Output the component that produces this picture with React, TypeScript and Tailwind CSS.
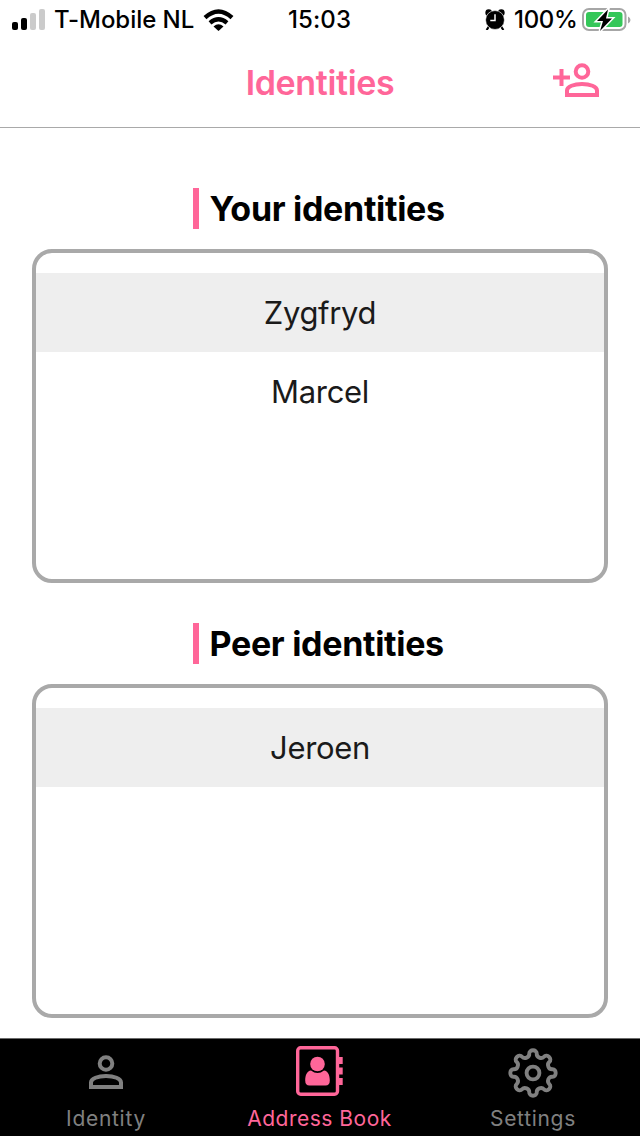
import React from "react";

function Person({ className }: { className: string }) {
  return (
    <svg className={className} viewBox="0 0 34 34" fill="none" stroke="currentColor" strokeWidth="4">
      <circle cx="17" cy="8.5" r="6.3" />
      <path d="M2 32V27.5C2 23.500 9 21 17 21S32 23.500 32 27.500V32Z" />
    </svg>
  );
}

function AddressBook() {
  return (
    <svg className="h-[50px] w-[47px]" viewBox="0 0 47 50" fill="currentColor">
      <rect x="1.700" y="1.700" width="39.800" height="46.600" rx="3" fill="none" stroke="currentColor" strokeWidth="3.400" />
      <path d="M42 11h4.700v7H42zM42 21.500h4.700v7H42zM42 32h4.700v7H42z" />
      <circle cx="21.500" cy="18" r="7.300" />
      <path d="M15 24.500Q21.500 29.500 28 24.500C32 25 33.800 29 33.800 34.500Q33.800 39.500 29.500 39.500H13.500Q9.200 39.500 9.200 34.500C9.200 29 11 25 15 24.500Z" />
    </svg>
  );
}

function Gear() {
  const lobes = [0, 45, 90, 135, 180, 225, 270, 315];
  const point = (r: number, deg: number) => {
    const a = ((deg - 90) * Math.PI) / 180;
    return `${(25 + r * Math.cos(a)).toFixed(2)} ${(25 + r * Math.sin(a)).toFixed(2)}`;
  };
  const d =
    `M${point(19.6, -11)}` +
    lobes
      .map(
        (a) =>
          `C${point(24.2, a - 10)} ${point(24.2, a + 10)} ${point(19.6, a + 11)}` +
          `C${point(16, a + 13)} ${point(16, a + 32)} ${point(19.6, a + 34)}`
      )
      .join("") +
    "Z";
  return (
    <svg className="size-[50px]" viewBox="0 0 50 50" fill="none" stroke="currentColor" strokeWidth="3.900" strokeLinejoin="round">
      <path d={d} />
      <circle cx="25" cy="25" r="6.400" />
    </svg>
  );
}

function StatusBar() {
  return (
    <div className="grid h-10 grid-cols-[260px_119px_261px] items-center text-[24px] font-medium leading-10 text-black">
      <div className="flex items-center pl-3">
        <svg className="mb-px h-[22px] w-[34px] shrink-0" viewBox="0 0 34 22">
          <rect x="0" y="13" width="6" height="8" rx="2" />
          <rect x="9" y="9" width="6" height="12" rx="2" />
          <rect x="18" y="4" width="6" height="17" rx="2" fill="#cbcbcb" />
          <rect x="27" y="0" width="6" height="21" rx="2" fill="#cbcbcb" />
        </svg>
        <span className="ml-2 w-[140px] whitespace-nowrap tracking-[-0.05px]">T-Mobile NL</span>
        <svg className="ml-[9px] h-[22px] w-[31px] shrink-0" viewBox="0 0 31 22" fill="none" stroke="#000" strokeWidth="4.300">
          <path d="M2 8.600Q15.500 -3.800 29 8.600" />
          <path d="M7 13.900Q15.500 6.700 24 13.900" />
          <path d="M10.500 17.500Q15.500 13 20.500 17.500L15.500 22Z" fill="#000" stroke="none" />
        </svg>
      </div>
      <div className="text-center tracking-[0.1px]">15:03</div>
      <div className="flex items-center justify-end pr-[9px]">
        <svg className="mb-px h-[21px] w-5" viewBox="0 0 19 20">
          <path d="M3.500 17L1.500 20M15.500 17l2 3" stroke="#000" strokeWidth="2" />
          <circle cx="3.500" cy="3.500" r="3.200" />
          <circle cx="15.500" cy="3.500" r="3.200" />
          <circle cx="9.500" cy="10.500" r="9" stroke="#fff" strokeWidth="0.600" />
          <path d="M9.500 5v6H5" fill="none" stroke="#fff" strokeWidth="1.400" />
        </svg>
        <span className="ml-[9px] w-[63px] whitespace-nowrap tracking-[-0.3px]">100%</span>
        <svg className="ml-[5px] h-6 w-[49px]" viewBox="0 0 49 24">
          <rect x="1" y="1" width="42.500" height="21" rx="6" fill="none" stroke="#a6a6a6" strokeWidth="2" />
          <path d="M46 8.500Q48.500 9.500 48.500 12T46 15.500Z" fill="#a6a6a6" />
          <rect x="4" y="4" width="36.500" height="15" rx="3" fill="#35c759" />
          <path d="M26 1.500L15 13H21L18 23L30 10.500H24Z" stroke="#fff" strokeWidth="3" paintOrder="stroke" />
        </svg>
      </div>
    </div>
  );
}

function Identities({ title, names }: { title: string; names: string[] }) {
  return (
    <section className="flex flex-col items-center">
      <h2 className="h-[41px] w-[254px] whitespace-nowrap border-l-[6px] border-[#ff6699] pl-[10.5px] text-[34px] font-bold leading-[42px] tracking-[-0.3px] text-black">
        {title}
      </h2>
      <ul className="mt-5 h-[334px] w-[576px] rounded-[20px] border-4 border-[#a9a9a9] pt-5">
        {names.map((name) => (
          <li key={name} className="h-[79px] text-center text-[31px] leading-[79px] tracking-[-0.35px] text-[#1a1a1a] first:bg-[#eeeeee]">
            {name}
          </li>
        ))}
      </ul>
    </section>
  );
}

export default function App() {
  return (
    <div className="flex h-[1136px] w-[640px] flex-col overflow-hidden bg-white font-['Inter',sans-serif]">
      <StatusBar />
      <header className="grid h-[88px] grid-cols-[120px_1fr_120px] border-b border-[#a9a9a9] text-[#ff6699]">
        <h1 className="col-start-2 text-center text-[34px] font-semibold leading-[86px] tracking-[-0.35px]">Identities</h1>
        <button className="flex items-start justify-end pr-[41px] pt-[23px]" aria-label="Add">
          <svg className="mt-[6px] size-[17px]" viewBox="0 0 17 17" stroke="currentColor" strokeWidth="4">
            <path d="M8.500 0v17M0 8.500h17" />
          </svg>
          <Person className="-ml-[5px] size-[34px]" />
        </button>
      </header>
      <main className="flex grow flex-col gap-10 pt-[60px]">
        <Identities title="Your identities" names={["Zygfryd", "Marcel"]} />
        <Identities title="Peer identities" names={["Jeroen"]} />
      </main>
      <nav className="grid h-[98px] shrink-0 grid-cols-[212px_215px_212px] border-t border-[#6b6b6b] bg-black text-[21px] leading-7 text-[#808080]">
        <a className="flex flex-col items-center">
          <span className="flex h-[66px] items-center"><Person className="size-[34px]" /></span>
          <span className="tracking-[0.7px]">Identity</span>
        </a>
        <a className="flex flex-col items-center text-[#ff6699]">
          <span className="flex h-[66px] items-center pb-0.5"><AddressBook /></span>
          <span className="tracking-[0.5px]">Address Book</span>
        </a>
        <a className="flex flex-col items-center">
          <span className="flex h-[66px] items-center pt-0.5"><Gear /></span>
          <span className="tracking-[0.7px]">Settings</span>
        </a>
      </nav>
    </div>
  );
}
